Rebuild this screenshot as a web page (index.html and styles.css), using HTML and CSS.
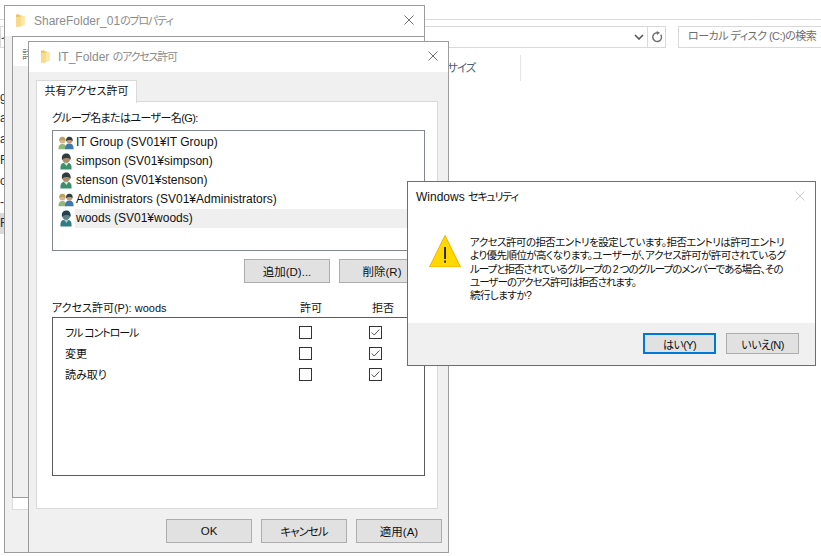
FILE: index.html
```html
<!DOCTYPE html>
<html lang="ja">
<head>
<meta charset="utf-8">
<title>IT_Folder のアクセス許可</title>
<link rel="stylesheet" href="styles.css">
</head>
<body>
<svg class="defs" width="0" height="0" aria-hidden="true">
  <symbol id="folder" viewBox="0 0 10 13">
    <path d="M1 0.5 L4.5 0.5 L4.5 1.5 L7 1.5 L7 2 L7 11.5 L1 12.5 Z" fill="#e9c25c"/>
    <path d="M1 3 L9.5 2 L9.5 10.5 L4 13 L1 12.5 Z" fill="#f7db8a"/>
    <path d="M6 2.4 L9.5 2 L9.5 10.5 L6 11.8 Z" fill="#fbe7a8"/>
  </symbol>
  <symbol id="close" viewBox="0 0 10 10">
    <path d="M0.5 0.5 L9.5 9.5 M9.5 0.5 L0.5 9.5" fill="none" stroke="currentColor" stroke-width="1"/>
  </symbol>
  <symbol id="user" viewBox="0 0 16 17">
    <path d="M2.5 16.5 C2 12 3.5 9.5 8 9.5 C12.5 9.5 14 12 13.5 16.5 Z" fill="#3d8f6e"/>
    <path d="M6 10 L8.5 13 L10.5 10 Z" fill="#d8e8de"/>
    <circle cx="8.2" cy="5.5" r="4.2" fill="#b08a6a"/>
    <path d="M4 7 C3.2 1.8 6 0.6 8.4 0.6 C11 0.6 13 2.4 12.6 7 C11.8 5.6 11 5.2 9.8 5 C8 5.2 5.4 5 4 7 Z" fill="#2e3d3d"/>
  </symbol>
  <symbol id="user-selected" viewBox="0 0 16 17">
    <path d="M2.5 16.5 C2 12 3.5 9.5 8 9.5 C12.5 9.5 14 12 13.5 16.5 Z" fill="#2f7d80"/>
    <path d="M6 10 L8.5 13 L10.5 10 Z" fill="#a9c9cc"/>
    <circle cx="8.2" cy="5.5" r="4.2" fill="#5f8088"/>
    <path d="M4 7 C3.2 1.8 6 0.6 8.4 0.6 C11 0.6 13 2.4 12.6 7 C11.8 5.6 11 5.2 9.8 5 C8 5.2 5.4 5 4 7 Z" fill="#24424f"/>
  </symbol>
  <symbol id="group" viewBox="0 0 18 15">
    <path d="M0.5 14.5 C0.3 10.5 2 8.5 5 8.5 C8 8.5 9.5 10.5 9.5 14.5 Z" fill="#8fb878"/>
    <circle cx="5" cy="4.8" r="3.4" fill="#d9b48c"/>
    <path d="M1.4 5.5 C1 1.6 3 0.6 5 0.6 C7 0.6 8.8 1.8 8.4 5.5 C7 3.6 3 3.6 1.4 5.5 Z" fill="#b9a35c"/>
    <path d="M8 14.5 C7.8 10.5 9.5 8.2 12.7 8.2 C16 8.2 17.7 10.5 17.5 14.5 Z" fill="#3f78b0"/>
    <circle cx="12.8" cy="4.8" r="3.4" fill="#c49a78"/>
    <path d="M9.2 5.5 C8.8 1.6 10.8 0.6 12.8 0.6 C15 0.6 16.8 1.8 16.4 5.5 C15 3.6 11 3.6 9.2 5.5 Z" fill="#2e3d48"/>
  </symbol>
  <symbol id="check" viewBox="0 0 13 13">
    <path d="M2 6.5 L5 9.5 L11 3" fill="none" stroke="#444" stroke-width="1.1"/>
  </symbol>
</svg>

<div class="explorer">
  <div class="ex-top"></div>
  <div class="ex-toolbar">
    <div class="ex-address">
      <span class="ex-crumb">イ</span>
      <svg class="ex-chevron" width="10" height="6" viewBox="0 0 10 6"><path d="M1 1 L5 5 L9 1" fill="none" stroke="#555" stroke-width="1.6"/></svg>
      <div class="ex-refresh">
        <svg width="12" height="12" viewBox="0 0 12 12"><path d="M9.8 3.6 A4.4 4.4 0 1 1 6.6 1.7" fill="none" stroke="#707070" stroke-width="1.5"/><path d="M5.6 0 L9 1.8 L6 4 Z" fill="#707070"/></svg>
      </div>
    </div>
    <div class="ex-search">ローカル ディスク (C:)の検索</div>
  </div>
  <div class="ex-body">
    <ul class="ex-nav">
      <li class="ex-nav-item">g</li>
      <li class="ex-nav-item">ar</li>
      <li class="ex-nav-item">ar</li>
      <li class="ex-nav-item">Fo</li>
      <li class="ex-nav-item">ow</li>
      <li class="ex-nav-item">-</li>
      <li class="ex-nav-item ex-nav-current">Fo</li>
    </ul>
    <div class="ex-columns">
      <span class="ex-col-name">サイズ</span>
    </div>
  </div>
</div>

<section class="window prop-window">
  <header class="titlebar prop-title">
    <svg class="folder-icon"><use href="#folder"/></svg>
    <span class="title-text">ShareFolder_01<span class="kana">のプロパティ</span></span>
    <svg class="close-icon"><use href="#close"/></svg>
  </header>
  <div class="prop-panel">
    <div class="prop-tabs"><span class="prop-tab">詳</span></div>
  </div>
  <div class="prop-panel-foot"></div>
</section>

<section class="window perm-window">
  <header class="titlebar perm-title">
    <svg class="folder-icon"><use href="#folder"/></svg>
    <span class="title-text">IT_Folder <span class="kana">のアクセス許可</span></span>
    <svg class="close-icon"><use href="#close"/></svg>
  </header>
  <div class="tab-strip"><span class="tab">共有アクセス許可</span></div>
  <div class="tab-panel">
    <div class="field-label">グループ名またはユーザー名(G):</div>
    <ul class="user-list">
      <li class="user-row"><svg class="icon-group"><use href="#group"/></svg><span class="user-name">IT Group (SV01¥IT Group)</span></li>
      <li class="user-row"><svg class="icon-user"><use href="#user"/></svg><span class="user-name">simpson (SV01¥simpson)</span></li>
      <li class="user-row"><svg class="icon-user"><use href="#user"/></svg><span class="user-name">stenson (SV01¥stenson)</span></li>
      <li class="user-row"><svg class="icon-group"><use href="#group"/></svg><span class="user-name">Administrators (SV01¥Administrators)</span></li>
      <li class="user-row"><svg class="icon-user"><use href="#user-selected"/></svg><span class="user-name is-selected">woods (SV01¥woods)</span></li>
    </ul>
    <div class="list-actions">
      <button class="btn">追加(D)...</button>
      <button class="btn">削除(R)</button>
    </div>
    <div class="perm-head">
      <span>アクセス許可(P): woods</span>
      <span>許可</span>
      <span>拒否</span>
    </div>
    <div class="perm-list">
      <span class="perm-name perm-name-tight">フル コントロール</span>
      <span class="checkbox"></span>
      <span class="checkbox"><svg class="check-icon"><use href="#check"/></svg></span>
      <span class="perm-name">変更</span>
      <span class="checkbox"></span>
      <span class="checkbox"><svg class="check-icon"><use href="#check"/></svg></span>
      <span class="perm-name">読み取り</span>
      <span class="checkbox"></span>
      <span class="checkbox"><svg class="check-icon"><use href="#check"/></svg></span>
    </div>
  </div>
  <footer class="dialog-actions">
    <button class="btn">OK</button>
    <button class="btn btn-tight">キャンセル</button>
    <button class="btn">適用(A)</button>
  </footer>
</section>

<section class="window alert-window">
  <header class="alert-title">
    <span>Windows <span class="kana">セキュリティ</span></span>
    <svg class="alert-close"><use href="#close"/></svg>
  </header>
  <div class="alert-body">
    <svg class="warn-icon" viewBox="0 0 32 32">
      <path d="M16 0.5 L31.5 32 L0.5 32 Z" fill="#ffd800" stroke="#f0b000" stroke-width="1" stroke-linejoin="round"/>
      <rect x="15.2" y="12" width="1.7" height="12" fill="#111"/>
      <rect x="15.2" y="25.5" width="1.7" height="2.2" fill="#111"/>
    </svg>
    <p class="alert-text">アクセス許可の拒否エントリを設定しています。拒否エントリは許可エントリ<br>より優先順位が高くなります。ユーザーが、アクセス許可が許可されているグ<br><span class="line-tight">ループと拒否されているグループの 2 つのグループのメンバーである場合、その</span><br><span class="line-tight">ユーザーのアクセス許可は拒否されます。</span><br>続行しますか?</p>
  </div>
  <footer class="alert-actions">
    <button class="btn btn-alert btn-default">はい(Y)</button>
    <button class="btn btn-alert">いいえ(N)</button>
  </footer>
</section>
</body>
</html>
```
FILE: styles.css
```css
* { box-sizing: border-box; }
html, body { margin: 0; padding: 0; }
body {
  width: 821px;
  height: 556px;
  overflow: hidden;
  position: relative;
  background: #fff;
  color: #111;
  font-family: "Liberation Sans", "Noto Sans CJK JP", sans-serif;
  font-size: 12px;
  font-feature-settings: "palt";
}
ul { list-style: none; margin: 0; padding: 0; }
p { margin: 0; }
.defs { position: absolute; }
.kana { font-size: 11px; letter-spacing: -1.2px; }

/* background explorer */
.explorer { width: 821px; height: 556px; overflow: hidden; }
.ex-top { height: 20px; border-bottom: 1px solid #dcdcdc; }
.ex-toolbar { display: flex; margin-top: 6px; height: 22px; }
.ex-address {
  width: 666px;
  flex: none;
  border: 1px solid #d9d9d9;
  display: flex;
  align-items: center;
  justify-content: flex-end;
  position: relative;
}
.ex-crumb { position: absolute; left: 0; top: 2px; width: 4px; overflow: hidden; color: #333; }
.ex-chevron { margin-right: 3px; }
.ex-refresh {
  width: 18px;
  height: 20px;
  border-left: 1px solid #d9d9d9;
  display: flex;
  align-items: center;
  justify-content: center;
}
.ex-search {
  margin-left: 12px;
  flex: 1;
  border: 1px solid #d9d9d9;
  border-right: 0;
  padding-left: 9px;
  line-height: 19px;
  font-size: 11px;
  letter-spacing: -0.5px;
  color: #6d6d6d;
  white-space: nowrap;
}
.ex-body { display: flex; }
.ex-nav { width: 4px; padding-top: 39px; overflow: hidden; }
.ex-nav-item { height: 21px; line-height: 21px; color: #1d2b4a; white-space: nowrap; }
.ex-nav-current { background: #d9d9d9; }
.ex-columns {
  margin-left: 443px;
  margin-top: 7px;
  width: 74px;
  height: 26px;
  border-right: 1px solid #e5e5e5;
  line-height: 27px;
  font-size: 11.5px;
  letter-spacing: -1px;
  color: #4c607a;
}

/* shared window */
.window {
  position: absolute;
  background: #f0f0f0;
  border: 1px solid #9c9c9c;
  display: flex;
  flex-direction: column;
}
.titlebar {
  display: flex;
  align-items: center;
  background: #fff;
  height: 30px;
  flex: none;
  padding-bottom: 2px;
}
.title-text { color: #8c8c8c; font-size: 12px; white-space: nowrap; }
.folder-icon { width: 10px; height: 13px; flex: none; }
.close-icon { width: 10px; height: 10px; margin-left: auto; color: #707070; flex: none; }

/* properties window behind */
.prop-window { left: 4px; top: 5px; width: 421px; height: 548px; }
.prop-title { padding-left: 10px; padding-right: 10px; }
.prop-title .title-text { margin-left: 9px; }
.prop-panel {
  margin: 0 0 0 7px;
  height: 462px;
  border: 1px solid #9c9c9c;
  border-right: 0;
  background: linear-gradient(#fff 29px, #f0f0f0 29px);
}
.prop-tabs { padding: 9px 0 0 9px; }
.prop-tab { color: #777; font-size: 11px; display: block; width: 6px; overflow: hidden; }
.prop-panel-foot {
  margin-left: 7px;
  height: 12px;
  background: #fff;
  border-left: 1px solid #dcdcdc;
  border-bottom: 1px solid #dcdcdc;
}

/* permissions dialog */
.perm-window { left: 28px; top: 41px; width: 421px; height: 512px; }
.perm-title { padding-left: 11px; padding-right: 10px; }
.perm-title .title-text { margin-left: 8px; }
.tab-strip { height: 30px; padding: 8px 0 0 7px; flex: none; }
.tab {
  display: block;
  width: 101px;
  height: 23px;
  background: #fff;
  border: 1px solid #d9d9d9;
  border-bottom: 0;
  text-align: center;
  line-height: 20px;
  font-size: 11px;
  color: #111;
  position: relative;
  z-index: 1;
}
.tab-panel {
  margin: -1px 10px 0 7px;
  height: 408px;
  background: #fff;
  border: 1px solid #d9d9d9;
  padding: 0 12px 0 15px;
  flex: none;
}
.field-label { height: 28px; padding-top: 8px; line-height: 16px; font-size: 11px; letter-spacing: -0.6px; }
.user-list {
  height: 121px;
  border: 1px solid #828790;
  padding: 2px 0 0 5px;
}
.user-row { display: flex; align-items: center; height: 19px; }
.icon-group { width: 16px; height: 14px; flex: none; margin-right: 2px; }
.icon-user { width: 16px; height: 17px; flex: none; margin: 0 2px 0 0; }
.user-name { flex: 1; line-height: 19px; padding-left: 0; white-space: nowrap; }
.is-selected { background: #efefef; margin-left: -1px; padding-left: 1px; }
.list-actions {
  display: flex;
  justify-content: flex-end;
  gap: 9px;
  margin-top: 8px;
}
.btn {
  width: 86px;
  height: 24px;
  padding: 0;
  background: #e1e1e1;
  border: 1px solid #adadad;
  font: inherit;
  font-size: 11.5px;
  font-feature-settings: inherit;
  color: #111;
}
.btn-tight { letter-spacing: -1px; }
.perm-head {
  display: grid;
  grid-template-columns: 248px 72px 1fr;
  margin-top: 15px;
  height: 19px;
  padding-top: 1px;
  line-height: 18px;
  font-size: 11px;
}
.perm-list {
  display: grid;
  grid-template-columns: 234px 70px 1fr;
  grid-auto-rows: 21px;
  align-content: start;
  align-items: center;
  height: 159px;
  border: 1px solid #5c5c5c;
  padding: 4px 0 0 12px;
}
.perm-name { line-height: 22px; white-space: nowrap; font-size: 11px; }
.perm-name-tight { letter-spacing: -1.1px; }
.checkbox {
  width: 13px;
  height: 13px;
  border: 1px solid #333;
  background: #fff;
  display: block;
}
.check-icon { width: 11px; height: 11px; display: block; }
.dialog-actions {
  display: flex;
  gap: 9px;
  margin-top: 10px;
  padding-left: 137px;
}

/* security alert */
.alert-window {
  left: 407px;
  top: 181px;
  width: 409px;
  height: 185px;
  background: #fff;
  border-color: #6e6e6e;
}
.alert-title {
  display: flex;
  align-items: center;
  justify-content: space-between;
  height: 30px;
  padding: 0 10px 2px 8px;
  flex: none;
  color: #111;
}
.alert-close { width: 10px; height: 10px; color: #c8c8c8; }
.alert-body {
  display: flex;
  flex: 1;
  padding: 23px 0 0 21px;
}
.warn-icon { width: 32px; height: 32px; flex: none; }
.alert-text {
  margin: 1px 0 0 9px;
  font-size: 10.5px;
  letter-spacing: -0.55px;
  line-height: 13.3px;
  white-space: nowrap;
  color: #111;
}
.line-tight { letter-spacing: -1px; }
.alert-actions {
  display: flex;
  justify-content: flex-end;
  align-items: flex-start;
  gap: 10px;
  height: 42px;
  padding: 10px 16px 0 0;
  background: #f0f0f0;
  flex: none;
}
.btn-alert { width: 73px; height: 21px; font-size: 11px; letter-spacing: -0.6px; }
.btn-default { border: 2px solid #0078d7; }
```
